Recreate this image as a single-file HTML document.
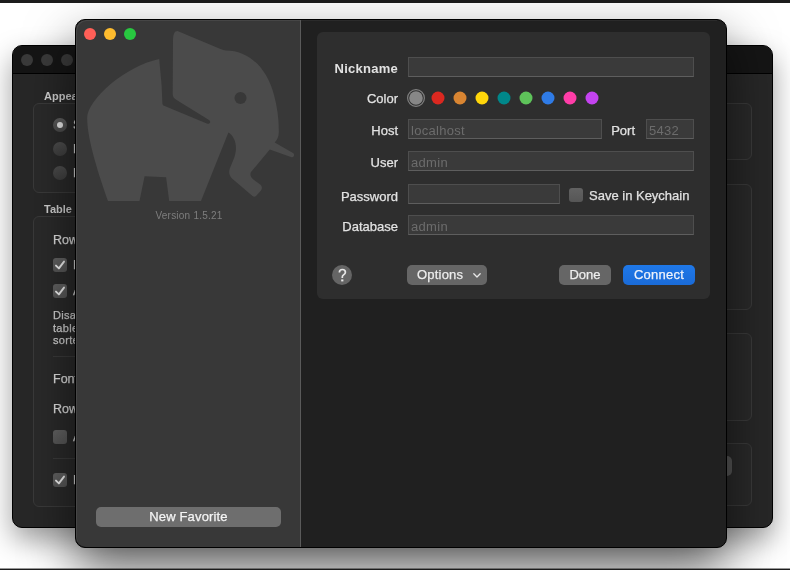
<!DOCTYPE html>
<html><head><meta charset="utf-8">
<style>
*{margin:0;padding:0;box-sizing:border-box}
html,body{width:790px;height:570px;overflow:hidden;background:#fff;font-family:"Liberation Sans",sans-serif}
body{will-change:transform}
.lab,.bt,.btn,.sm{-webkit-text-stroke:.25px currentColor}
div,span{position:absolute}
#topbar{left:0;top:0;width:790px;height:3px;background:#1c1c1c;z-index:10}
#botbar{left:0;top:568px;width:790px;height:2px;background:linear-gradient(rgba(28,28,28,.45) 50%,#1c1c1c 50%);z-index:10}
/* back window */
#bw{left:12px;top:45px;width:761px;height:483px;border-radius:10px;background:#272727;overflow:hidden;box-shadow:0 12px 28px rgba(0,0,0,.38);border:1px solid #000}
.bdot{width:12px;height:12px;border-radius:50%;background:#3a3a3a;top:54px}
.blbl{color:#cfcfcf;font-size:11px;font-weight:bold;line-height:16px}
.box{border:1px solid #3a3a3a;border-radius:6px;background:rgba(255,255,255,.015)}
.radio{width:14px;height:14px;border-radius:50%;background:linear-gradient(#4e4e4e,#3e3e3e)}
.radio.on{background:linear-gradient(#5e5e5e,#4a4a4a)}
.cb{width:14px;height:14px;border-radius:3px;background:linear-gradient(#626262,#565656);color:#f0f0f0;font-size:12px;line-height:14px;text-align:center;font-weight:bold}
.bt{color:#dedede;font-size:12.5px;line-height:16px;white-space:nowrap}
.sm{color:#d2d2d2;font-size:11px;line-height:12.6px;letter-spacing:.3px;white-space:nowrap}
.sep{height:1px;background:#3a3a3a}
/* front window */
#fw{left:75px;top:19px;width:652px;height:529px;border-radius:10px;background:#202020;border:1px solid #000;overflow:hidden;box-shadow:0 22px 50px rgba(0,0,0,.6)}
#side{left:76px;top:20px;width:224px;height:527px;background:#383838;border-radius:10px 0 0 10px;box-shadow:inset 1px 1px 0 rgba(255,255,255,.07)}
#divider{left:300px;top:20px;width:1px;height:527px;background:#5a5a5a}
.tl{width:12px;height:12px;border-radius:50%;top:28px}
#panel{left:317px;top:32px;width:393px;height:267px;background:#2e2e2e;border-radius:6px}
.lab{color:#e2e2e2;font-size:13px;line-height:16px;text-align:right;white-space:nowrap;width:120px;left:278px}
.fld{background:#3a3a3a;border:1px solid #4e4e4e;border-bottom-color:#5e5e5e;height:20px;left:408px}
.ph{color:#6c6c6c;font-size:13px;line-height:16px;left:2px;top:3px;white-space:nowrap;letter-spacing:.3px}
.btn{background:#666;border-radius:5px;height:20px;color:#ededed;font-size:13px;text-align:center;line-height:20px;top:265px;white-space:nowrap}
.sw{width:13px;height:13px;border-radius:50%;top:91px}
</style></head><body>
<div id="topbar"></div>
<div id="botbar"></div>

<div id="bw"></div>
<div style="left:13px;top:46px;width:759px;height:27px;background:#151515;border-radius:9px 9px 0 0"></div>
<div class="bdot" style="left:21px"></div>
<div class="bdot" style="left:41px"></div>
<div class="bdot" style="left:61px"></div>
<div style="left:13px;top:73px;width:759px;height:1px;background:#000"></div>

<div class="blbl" style="left:44px;top:88px">Appearance</div>
<div class="box" style="left:33px;top:103px;width:670px;height:90px"></div>
<div class="radio on" style="left:53px;top:118px"><div style="left:4px;top:4px;width:6px;height:6px;border-radius:50%;background:#e6e6e6"></div></div>
<div class="radio" style="left:53px;top:142px"></div>
<div class="radio" style="left:53px;top:166px"></div>
<div class="bt" style="left:73px;top:117px">System</div>
<div class="bt" style="left:73px;top:141px">Light</div>
<div class="bt" style="left:73px;top:165px">Dark</div>
<div class="box" style="left:690px;top:103px;width:62px;height:57px"></div>
<div class="box" style="left:690px;top:184px;width:62px;height:126px"></div>
<div class="box" style="left:690px;top:333px;width:62px;height:88px"></div>
<div class="box" style="left:690px;top:443px;width:62px;height:63px"></div>
<div style="left:700px;top:456px;width:32px;height:20px;border-radius:5px;background:#575757"></div>
<div class="blbl" style="left:44px;top:201px">Table</div>
<div class="box" style="left:33px;top:216px;width:670px;height:291px"></div>
<div class="bt" style="left:53px;top:232px">Rows</div>
<div class="cb" style="left:53px;top:258px"><svg style="position:absolute;left:0;top:0" width="14" height="14"><polyline points="3,7.6 5.9,10.4 11,3.6" fill="none" stroke="#f2f2f2" stroke-width="1.9" stroke-linecap="round" stroke-linejoin="round"/></svg></div>
<div class="bt" style="left:73px;top:257px">Limit</div>
<div class="cb" style="left:53px;top:284px"><svg style="position:absolute;left:0;top:0" width="14" height="14"><polyline points="3,7.6 5.9,10.4 11,3.6" fill="none" stroke="#f2f2f2" stroke-width="1.9" stroke-linecap="round" stroke-linejoin="round"/></svg></div>
<div class="bt" style="left:73px;top:283px">Automatic</div>
<div class="sm" style="left:53px;top:309px;width:200px">Disable table sorting when table<br>tables is more than rows to keep<br>sorted</div>
<div class="sep" style="left:53px;top:356px;width:600px"></div>
<div class="bt" style="left:53px;top:371px">Font</div>
<div class="bt" style="left:53px;top:401px">Rows</div>
<div class="cb" style="left:53px;top:430px"></div>
<div class="bt" style="left:73px;top:429px">Alternate</div>
<div class="sep" style="left:53px;top:458px;width:600px"></div>
<div class="cb" style="left:53px;top:473px"><svg style="position:absolute;left:0;top:0" width="14" height="14"><polyline points="3,7.6 5.9,10.4 11,3.6" fill="none" stroke="#f2f2f2" stroke-width="1.9" stroke-linecap="round" stroke-linejoin="round"/></svg></div>
<div class="bt" style="left:73px;top:472px">Large</div>
<div id="fw"></div>
<div id="side"></div>
<div id="divider"></div>
<div style="left:301px;top:20px;width:416px;height:1px;background:rgba(255,255,255,.05)"></div>
<div class="tl" style="left:84px;background:#ff5f57"></div>
<div class="tl" style="left:104px;background:#febc2e"></div>
<div class="tl" style="left:124px;background:#28c840"></div>
<svg style="position:absolute;left:0;top:0" width="790" height="570">
<path fill="#4b4b4b" d="M177.5 31 L220.5 49 C222.5 49.8 224 50.4 226 50.5 C249 50.5 267 68 274 95 C277.3 107 279 120 278.8 132 C278.8 137 277 140 274.7 142.5 L293 153 C295 154.2 294 157.8 291.6 157.2 L269.8 149.5 L251 172 C249.8 174 250.5 177 253 179.2 L260.5 184.8 C262.5 186.5 262 189 261 190.5 L256 196 C255 197 253.5 197 252.5 196 L232 178.5 C229 175.5 228.5 172 230 168 L234.5 157 C236.5 150 236.5 144 234 139 C232.5 136 230.5 133.5 228.4 132.6 L201 201 L169.2 201 L166.1 177.2 L144.6 176.3 L139.5 201 L108 201 C100 178 87 140 87.2 118 C87 100 125 66 159.2 58.9 L161.6 85 L162.4 103.5 C162.6 105 163.5 105.8 164.7 106 L207.4 123.7 C209.5 124.3 211.5 122 209 120 L176.6 100 C174 98.5 172.7 96.5 172.7 94 L173 40 C173.2 34 174.5 31 177.5 31 Z"/>
<circle cx="240.5" cy="98" r="6" fill="#383838"/>
</svg>
<div style="left:77px;top:208px;width:224px;text-align:center;color:#7e7e7e;font-size:10px;line-height:16px;letter-spacing:.22px">Version 1.5.21</div>
<div class="btn" style="left:96px;top:507px;width:185px;background:#6e6e6e;color:#f4f4f4;letter-spacing:.15px">New Favorite</div>

<div id="panel"></div>
<div class="lab" style="top:61px;font-weight:bold;letter-spacing:.25px;-webkit-text-stroke:0">Nickname</div>
<div class="fld" style="top:57px;width:286px"></div>
<div class="lab" style="top:91px">Color</div>
<svg style="position:absolute;left:0;top:0" width="790" height="570">
<circle cx="416" cy="98" r="8.4" fill="none" stroke="#808080" stroke-width="1.2"/>
<circle cx="416" cy="98" r="6.8" fill="#878787"/>
<circle cx="438" cy="98" r="6.5" fill="#db2820"/>
<circle cx="460" cy="98" r="6.5" fill="#d98532"/>
<circle cx="482" cy="98" r="6.5" fill="#ffd60a"/>
<circle cx="504" cy="98" r="6.5" fill="#00878a"/>
<circle cx="526" cy="98" r="6.5" fill="#5ec35a"/>
<circle cx="548" cy="98" r="6.5" fill="#2f7be6"/>
<circle cx="570" cy="98" r="6.5" fill="#ff3da8"/>
<circle cx="592" cy="98" r="6.5" fill="#c443f0"/>
</svg>
<div class="lab" style="top:123px">Host</div>
<div class="fld" style="top:119px;width:194px"><span class="ph">localhost</span></div>
<div class="lab" style="left:515px;top:123px">Port</div>
<div class="fld" style="left:646px;top:119px;width:48px"><span class="ph">5432</span></div>
<div class="lab" style="top:155px">User</div>
<div class="fld" style="top:151px;width:286px"><span class="ph">admin</span></div>
<div class="lab" style="top:189px">Password</div>
<div class="fld" style="top:184px;width:152px"></div>
<div class="cb" style="left:569px;top:188px"></div>
<div class="lab" style="left:589px;top:188px;text-align:left">Save in Keychain</div>
<div class="lab" style="top:219px">Database</div>
<div class="fld" style="top:215px;width:286px"><span class="ph">admin</span></div>
<div style="left:332px;top:265px;width:20px;height:20px;border-radius:50%;background:#656565"></div><svg style="position:absolute;left:0;top:0" width="790" height="570"><path d="M339.4 272.4 C339.4 270.5 340.7 269.5 342.4 269.5 C344.1 269.5 345.4 270.6 345.4 272.2 C345.4 273.7 344.4 274.3 343.4 275 C342.6 275.5 342.3 276.1 342.3 277.1 L342.3 278" fill="none" stroke="#e8e8e8" stroke-width="1.7"/><rect x="341.2" y="279.4" width="2.2" height="2" fill="#e8e8e8"/></svg>
<div class="btn" style="left:407px;width:80px;text-align:left;padding-left:10px;letter-spacing:.2px">Options<svg style="position:absolute;left:65px;top:7px" width="10" height="7"><polyline points="1.8,1.8 5,5 8.2,1.8" fill="none" stroke="#e8e8e8" stroke-width="1.3" stroke-linecap="round" stroke-linejoin="round"/></svg></div>
<div class="btn" style="left:559px;width:52px">Done</div>
<div class="btn" style="left:623px;width:72px;background:linear-gradient(#1f78e8,#1a6bd8);color:#eef3fb;letter-spacing:.25px">Connect</div>
</body></html>
